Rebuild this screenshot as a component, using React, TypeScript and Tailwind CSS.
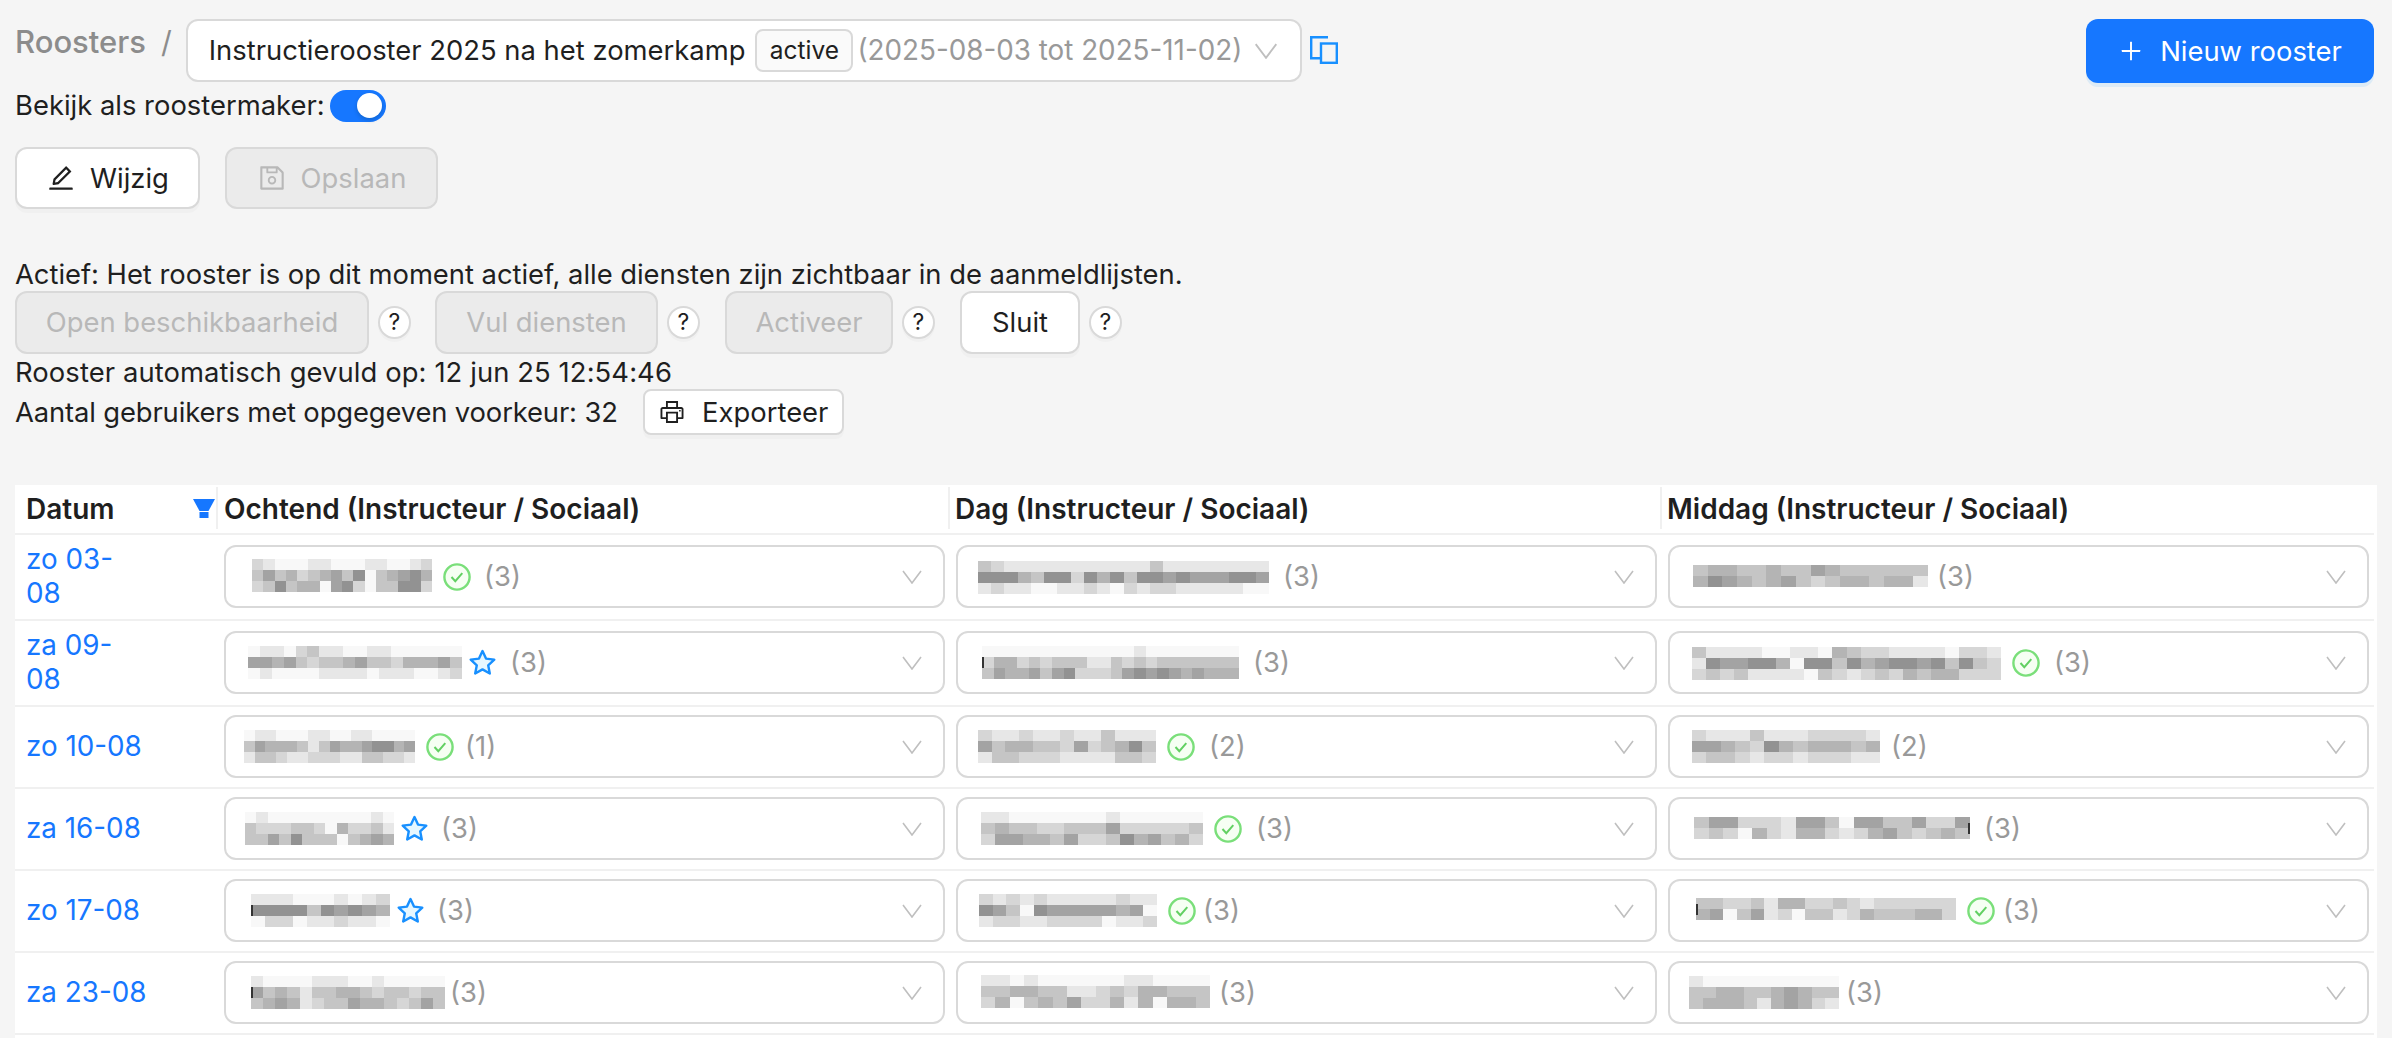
import { AiOutlineEdit, AiOutlinePlus, AiOutlinePrinter, AiOutlineSave } from "react-icons/ai";

type Mark = "check" | "star" | null;

interface Pick {
  // mosaic left offset inside the select, its width, and the gap to the count
  x: number;
  w: number;
  dy: number;
  rows: string[];
  mark: Mark;
  gap: number;
  count: number;
  // a sliver of the name that sticks out of the blur
  ink?: "left" | "right";
}

interface Row {
  date: string;
  wraps?: boolean;
  picks: Pick[];
}

const rows: Row[] = [
  {
    date: "zo 03-08",
    wraps: true,
    picks: [
      { x: 28, w: 180, dy: -1, mark: "check", gap: 13, count: 3, rows: ["2100011000110012", "3534234536034564", "2363440562033662"] },
      { x: 22, w: 291, dy: 1, mark: null, gap: 14, count: 3, rows: ["3211111111111311111111", "6664366264636656555665", "1211001121021221111100"] },
      { x: 25, w: 235, dy: -1, mark: null, gap: 9, count: 3, rows: ["3443343354333333", "4654345323443441"] },
    ],
  },
  {
    date: "za 09-08",
    wraps: true,
    picks: [
      { x: 24, w: 214, dy: 0, mark: "star", gap: 14, count: 3, rows: ["011023110011000000", "554532334533244453", "010000111101110012"] },
      { x: 26, w: 257, dy: 0, mark: null, gap: 14, count: 3, ink: "left", rows: ["0000000000000100000000", "2442323331132323333333", "3544535622235656545444"] },
      { x: 24, w: 309, dy: 1, mark: "check", gap: 14, count: 3, rows: ["3111100110432211110221", "1655664066364566563632", "2323111103212324344222"] },
    ],
  },
  {
    date: "zo 10-08",
    picks: [
      { x: 20, w: 171, dy: 0, mark: "check", gap: 11, count: 1, rows: ["0110001100110000", "3544431354456645", "1332112221133221"] },
      { x: 22, w: 178, dy: 0, mark: "check", gap: 14, count: 2, rows: ["2112112113111", "5344332523463", "1332221111332"] },
      { x: 24, w: 188, dy: 0, mark: null, gap: 11, count: 2, rows: ["2111311122221", "5543264344434", "2332122122211"] },
    ],
  },
  {
    date: "za 16-08",
    picks: [
      { x: 21, w: 149, dy: 0, mark: "star", gap: 13, count: 3, rows: ["0100000000010", "3222332042231", "3353633303454"] },
      { x: 25, w: 222, dy: 0, mark: "check", gap: 14, count: 3, rows: ["1100000001000000", "3433223335222223", "2554435223645342"] },
      { x: 26, w: 276, dy: -1, mark: null, gap: 14, count: 3, ink: "right", rows: ["3552221553055335225", "2320421442124532343"] },
    ],
  },
  {
    date: "zo 17-08",
    picks: [
      { x: 27, w: 139, dy: 0, mark: "star", gap: 13, count: 3, ink: "left", rows: ["1110001012", "6666365654", "0220112110"] },
      { x: 23, w: 178, dy: 0, mark: "check", gap: 7, count: 3, rows: ["2121211111211", "6530655555450", "1221122220112"] },
      { x: 28, w: 260, dy: -2, mark: "check", gap: 8, count: 3, ink: "left", rows: ["3322314422321222222", "4503512033124333442"] },
    ],
  },
  {
    date: "za 23-08",
    picks: [
      { x: 27, w: 194, dy: 0, mark: null, gap: 5, count: 3, ink: "left", rows: ["1000011100100000", "5343133443233233", "3454123354432353"] },
      { x: 25, w: 229, dy: -1, mark: null, gap: 9, count: 3, rows: ["1101000000110000", "3344331123244333", "2403435224140443"] },
      { x: 21, w: 150, dy: 0, mark: null, gap: 7, count: 3, rows: ["10000000000", "33443345433", "34443145421"] },
    ],
  },
];

function Mosaic({ pick }: { pick: Pick }) {
  const cols = Math.max(...pick.rows.map((r) => r.length));
  const high = pick.rows.length;
  return (
    <svg
      width={pick.w}
      height={high * 11}
      viewBox={`0 0 ${cols} ${high}`}
      preserveAspectRatio="none"
      shapeRendering="crispEdges"
      className="shrink-0"
      style={{ marginLeft: pick.x - 22, marginTop: pick.dy * 2 }}
    >
      {pick.rows.map((r, y) =>
        r.split("").map((c, x) => {
          const g = 248 - Number(c) * 17;
          return <rect key={x} x={x} y={y} width={1.02} height={1.02} fill={`rgb(${g},${g},${g})`} />;
        })
      )}
      {pick.ink && <rect x={pick.ink === "left" ? 0 : cols - 0.14} y={high / 2 - 0.5} width={0.14} height={1} fill="#333333" />}
    </svg>
  );
}

function Chevron({ large }: { large?: boolean }) {
  return (
    <svg viewBox="0 0 20 14" className={large ? "h-[16px] w-[24px] shrink-0" : "h-[14px] w-[20px] shrink-0"} fill="none" stroke="#bfbfbf" strokeWidth="1.6">
      <path d="M1 1l9 12 9-12" />
    </svg>
  );
}

function CheckMark() {
  return (
    <svg viewBox="0 0 28 28" className="h-[28px] w-[28px] shrink-0" fill="none">
      <circle cx="14" cy="14" r="12.6" fill="#f6fff3" stroke="#7adf7a" strokeWidth="2.4" />
      <path d="M8.5 14l3.8 4.2 7-8" stroke="#62d062" strokeWidth="2" />
    </svg>
  );
}

function StarMark() {
  return (
    <svg viewBox="0 0 27 27" className="h-[27px] w-[27px] shrink-0">
      <path
        d="M13.5 2l3.5 7.6 8.3 1-6.1 5.7 1.6 8.2-7.3-4.1-7.3 4.1 1.6-8.2-6.1-5.7 8.3-1z"
        fill="#e6f7ff"
        stroke="#1890ff"
        strokeWidth="2.4"
        strokeLinejoin="round"
      />
    </svg>
  );
}

function FilterMark() {
  return (
    <svg viewBox="0 0 22 19" className="absolute right-[3px] top-[14px] h-[19px] w-[22px]" fill="#1677ff">
      <path d="M0 0H22L15.5 12H6.5Z" />
      <rect x="6.5" y="13" width="9" height="6" />
    </svg>
  );
}

function RowSelect({ pick }: { pick: Pick }) {
  return (
    <div className="flex h-[63px] items-center rounded-[12px] border-2 border-[#d9d9d9] bg-white pl-5 pr-[21px]">
      <Mosaic pick={pick} />
      {pick.mark === "check" && (
        <span className="ml-[11px] flex">
          <CheckMark />
        </span>
      )}
      {pick.mark === "star" && (
        <span className="ml-[7px] flex">
          <StarMark />
        </span>
      )}
      <span className="text-[#999999]" style={{ marginLeft: pick.gap }}>
        ({pick.count})
      </span>
      <span className="ml-auto flex">
        <Chevron />
      </span>
    </div>
  );
}

function HelpDot() {
  return (
    <span className="ml-[9px] flex h-[33px] w-[33px] shrink-0 items-center justify-center rounded-full border-2 border-[#d9d9d9] bg-white text-[23px] shadow-[0_3px_0_rgba(0,0,0,0.02)]">
      ?
    </span>
  );
}

function DisabledButton({ label, width }: { label: string; width: string }) {
  return (
    <div className={`flex h-[63px] items-center justify-center rounded-[12px] border-2 border-[#d9d9d9] bg-[#ebebeb] text-[#b8b8b8] ${width}`}>
      {label}
    </div>
  );
}

export default function App() {
  return (
    <div className="flex h-screen flex-col overflow-hidden bg-[#f5f5f5] px-[15px] pt-[19px] font-['Inter',sans-serif] text-[27.4px] leading-[33px] text-[#1f1f1f]">
      <div className="flex items-start">
        <span className="mt-[5px] text-[31px] font-medium leading-[36px] text-[#8c8c8c]">Roosters</span>
        <span className="ml-[15px] mr-[14px] mt-[5px] text-[30px] leading-[36px] text-[#8c8c8c]">/</span>
        <div className="flex h-[63px] w-[1116px] items-center rounded-[12px] border-2 border-[#d9d9d9] bg-white pl-[21px] pr-[22px]">
          <span className="whitespace-nowrap">Instructierooster 2025 na het zomerkamp</span>
          <span className="ml-[10px] flex h-[43px] w-[98px] items-center justify-center rounded-[8px] border-2 border-[#d9d9d9] bg-[#fafafa] text-[24.5px]">
            active
          </span>
          <span className="ml-[4px] whitespace-nowrap text-[27.8px] text-[#999999]">(2025-08-03 tot 2025-11-02)</span>
          <span className="ml-auto flex">
            <Chevron large />
          </span>
        </div>
        <svg viewBox="0 0 28 28" className="ml-[8px] mt-[17px] h-[28px] w-[28px]" fill="none" stroke="#1890ff" strokeWidth="2.4">
          <path d="M18 1.2H1.2v21H10" />
          <rect x="11" y="7.5" width="15.8" height="19.3" />
        </svg>
        <button className="ml-auto mr-[3px] flex h-[64px] w-[288px] items-center justify-center gap-[16px] rounded-[12px] bg-[#1677ff] text-white shadow-[0_4px_0_rgba(5,145,255,0.1)]">
          <AiOutlinePlus className="text-[26px]" />
          Nieuw rooster
        </button>
      </div>

      <div className="mt-[6px] flex h-[33px] items-center">
        <span>Bekijk als roostermaker:</span>
        <span className="ml-[5px] flex h-[32px] w-[56px] items-center justify-end rounded-full bg-[#1677ff] pr-[4px]">
          <span className="h-[25px] w-[25px] rounded-full bg-white shadow-[0_2px_4px_rgba(0,35,11,0.2)]" />
        </span>
      </div>

      <div className="mt-[25px] flex gap-[25px]">
        <button className="flex h-[62px] w-[185px] items-center justify-center gap-[14px] rounded-[12px] border-2 border-[#d9d9d9] bg-white shadow-[0_4px_0_rgba(0,0,0,0.02)]">
          <AiOutlineEdit className="text-[30px]" />
          Wijzig
        </button>
        <div className="flex h-[62px] w-[213px] items-center justify-center gap-[14px] rounded-[12px] border-2 border-[#d9d9d9] bg-[#ebebeb] text-[#b8b8b8]">
          <AiOutlineSave className="text-[30px]" />
          Opslaan
        </div>
      </div>

      <p className="mt-[49px] tracking-[-0.03px]">Actief: Het rooster is op dit moment actief, alle diensten zijn zichtbaar in de aanmeldlijsten.</p>

      <div className="flex items-center">
        <DisabledButton label="Open beschikbaarheid" width="w-[354px]" />
        <HelpDot />
        <span className="ml-[24px] flex">
          <DisabledButton label="Vul diensten" width="w-[223px]" />
        </span>
        <HelpDot />
        <span className="ml-[25px] flex">
          <DisabledButton label="Activeer" width="w-[168px]" />
        </span>
        <HelpDot />
        <button className="ml-[25px] flex h-[63px] w-[120px] items-center justify-center rounded-[12px] border-2 border-[#d9d9d9] bg-white shadow-[0_4px_0_rgba(0,0,0,0.02)]">
          Sluit
        </button>
        <HelpDot />
      </div>

      <p className="mt-[2px] tracking-[0.09px]">Rooster automatisch gevuld op: 12 jun 25 12:54:46</p>

      <div className="flex items-center">
        <span className="tracking-[-0.14px]">Aantal gebruikers met opgegeven voorkeur: 32</span>
        <button className="ml-[25px] flex h-[46px] w-[201px] items-center justify-center gap-[16px] rounded-[8px] border-2 border-[#d9d9d9] bg-white shadow-[0_4px_0_rgba(0,0,0,0.02)]">
          <AiOutlinePrinter className="text-[28px]" />
          Exporteer
        </button>
      </div>

      <div className="mt-[50px] flex-1 bg-white">
        <table className="w-[2359px] table-fixed border-separate border-spacing-0">
          <colgroup>
            <col className="w-[203px]" />
            <col className="w-[732px]" />
            <col className="w-[712px]" />
            <col className="w-[712px]" />
          </colgroup>
          <thead>
            <tr className="text-[28px]">
              <th className="relative h-[50px] border-b-2 border-[#f0f0f0] pl-[11px] text-left font-semibold">
                Datum
                <FilterMark />
                <span className="absolute bottom-[4px] right-0 top-[2px] w-[2px] bg-[#f0f0f0]" />
              </th>
              <th className="relative border-b-2 border-[#f0f0f0] pl-[6px] text-left font-semibold">
                Ochtend (Instructeur / Sociaal)
                <span className="absolute bottom-[4px] right-0 top-[2px] w-[2px] bg-[#f0f0f0]" />
              </th>
              <th className="relative border-b-2 border-[#f0f0f0] pl-[5px] text-left font-semibold">
                Dag (Instructeur / Sociaal)
                <span className="absolute bottom-[4px] right-0 top-[2px] w-[2px] bg-[#f0f0f0]" />
              </th>
              <th className="border-b-2 border-[#f0f0f0] pl-[5px] text-left font-semibold">Middag (Instructeur / Sociaal)</th>
            </tr>
          </thead>
          <tbody>
            {rows.map((row) => (
              <tr key={row.date}>
                <td className="border-b-2 border-[#f0f0f0] pl-[11px] pt-[8px] pb-[9px] align-middle text-[27.8px] leading-[33.5px] text-[#1677ff]">
                  <span className={row.wraps ? "block w-[110px]" : "block whitespace-nowrap"}>{row.date}</span>
                </td>
                {row.picks.map((pick, i) => (
                  <td key={i} className="border-b-2 border-[#f0f0f0] pl-[6px] pr-[5px] pt-[8px] pb-[9px]">
                    <RowSelect pick={pick} />
                  </td>
                ))}
              </tr>
            ))}
          </tbody>
        </table>
      </div>
    </div>
  );
}
